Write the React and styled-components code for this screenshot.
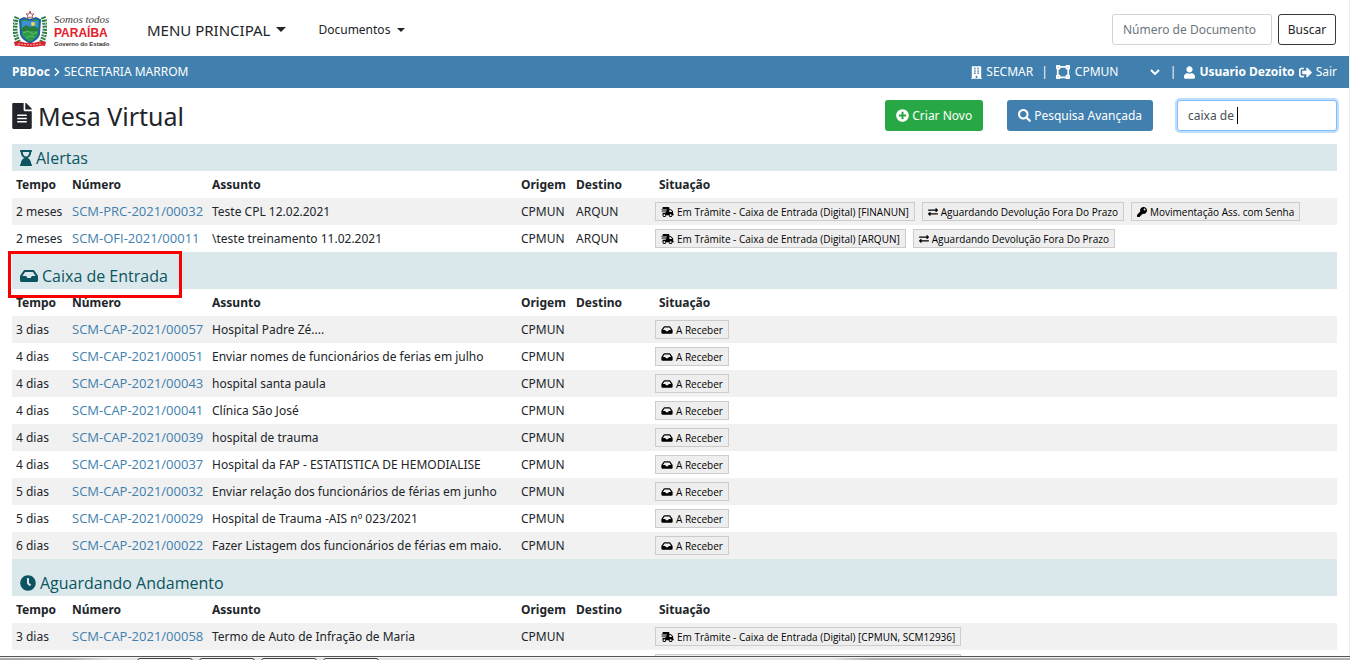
import React from "react";
import styled, { createGlobalStyle, css } from "styled-components";
import {
  FaBuilding,
  FaChevronRight,
  FaClock,
  FaExchangeAlt,
  FaFileAlt,
  FaHourglassEnd,
  FaInbox,
  FaKey,
  FaPlusCircle,
  FaSearch,
  FaShippingFast,
  FaSignOutAlt,
  FaUser,
  FaVectorSquare,
} from "react-icons/fa";

const color = {
  text: "#212529",
  primary: "#407fae",
  success: "#28a745",
  info: "#0c5460",
  infoBg: "#dae8ec",
  stripe: "#f1f1f1",
};

const GlobalStyle = createGlobalStyle`
  *, *::before, *::after { box-sizing: border-box; }
  body {
    margin: 0;
    background: #fff;
    color: ${color.text};
    font-family: "Noto Sans", "Open Sans", sans-serif;
    font-size: 12px;
    line-height: 18px;
  }
  button, input, select { font: inherit; }
`;

const Glyph = styled.svg`
  flex: none;
  width: ${(p) => p.$width}px;
  height: ${(p) => p.$height || p.$width}px;
`;

const Screen = styled.div`
  display: flex;
  flex-direction: column;
  height: 100vh;
`;

const Page = styled.div`
  flex: 1;
  min-height: 0;
  overflow: hidden;
  border-right: 1px solid #ececec;
`;

const Header = styled.header`
  display: flex;
  align-items: center;
  height: 56px;
  padding: 3px 13px 0 12px;
`;

const Brand = styled.a`
  display: flex;
  align-items: center;
  gap: 7px;
  width: 135px;
  padding-left: 1px;
  text-decoration: none;
`;

const Shield = styled.svg`
  width: 34px;
  height: 37px;
`;

const BrandText = styled.span`
  display: flex;
  flex-direction: column;
  white-space: nowrap;
`;

const Slogan = styled.span`
  color: #444;
  font: italic 11px/14px "Liberation Serif", serif;
`;

const StateName = styled.span`
  color: #e3202b;
  font: bold 12px/14px "Liberation Sans", sans-serif;
`;

const Government = styled.span`
  color: #333;
  font: bold 6px/8px "Liberation Sans", sans-serif;
`;

const Nav = styled.nav`
  display: flex;
  align-items: center;
  gap: 32px;
  flex: 1;
`;

const MenuButton = styled.button`
  display: flex;
  align-items: center;
  gap: ${(p) => (p.$large ? 6 : 7)}px;
  padding: 0;
  border: 0;
  background: none;
  color: ${color.text};
  font-size: ${(p) => (p.$large ? 15 : 12)}px;

  &::after {
    content: "";
    border: ${(p) => (p.$large ? 5 : 4)}px solid transparent;
    border-top-color: ${color.text};
    border-bottom: 0;
  }
`;

const HeaderSearch = styled.form`
  display: flex;
  gap: 6px;
`;

const TextInput = styled.input`
  display: block;
  width: 160px;
  height: 31px;
  padding: 0 10px;
  border: 1px solid #ced4da;
  border-radius: 3px;
  outline: 0;
  background: #fff;
  color: #495057;

  &::placeholder { color: #6c757d; opacity: 1; }

  ${(p) =>
    p.$focused &&
    css`
      border-color: #80bdff;
      box-shadow: 0 0 0 2px rgba(0, 123, 255, 0.25);
    `}
`;

const OutlineButton = styled.button`
  height: 31px;
  width: 58px;
  padding: 0;
  border: 1px solid #343a40;
  border-radius: 3px;
  background: #fff;
  color: ${color.text};
`;

const StatusBar = styled.div`
  display: flex;
  align-items: center;
  justify-content: space-between;
  height: 32px;
  padding: 0 12px;
  background: ${color.primary};
  color: #fff;
`;

const Breadcrumb = styled.div`
  display: flex;
  align-items: center;
  gap: 4px;
`;

const SessionInfo = styled.div`
  display: flex;
  align-items: center;
  gap: 8px;
`;

const SessionItem = styled.span`
  display: flex;
  align-items: center;
  gap: 4px;
`;

const UnitSelect = styled.select`
  appearance: none;
  width: 90px;
  height: 24px;
  padding: 0;
  border: 0;
  background: none;
  color: inherit;
`;

const UnitField = styled.label`
  display: flex;
  align-items: center;
  gap: 5px;
  margin-right: 2px;
`;

const UnitChevron = styled.svg`
  width: 10px;
  height: 6px;
  margin-left: -20px;
  pointer-events: none;
`;

const LogoutLink = styled.a`
  display: flex;
  align-items: center;
  gap: 4px;
  color: #fff;
  text-decoration: none;
`;

const Main = styled.main`
  padding: 0 12px;
`;

const TitleBar = styled.div`
  display: flex;
  align-items: center;
  justify-content: space-between;
  height: 56px;
  padding-bottom: 1px;
`;

const Title = styled.h1`
  display: flex;
  align-items: center;
  gap: 6px;
  margin: 0;
  font-size: 25px;
  font-weight: 400;
  line-height: 32px;
`;

const Actions = styled.div`
  display: flex;
  gap: 24px;
`;

const ActionButton = styled.button`
  display: flex;
  align-items: center;
  gap: 3px;
  height: 31px;
  padding: 0 11px;
  border: 0;
  border-radius: 3px;
  background: ${(p) => (p.$success ? color.success : color.primary)};
  color: #fff;
`;

const FilterField = styled.div`
  position: relative;
`;

const TextCursor = styled.span`
  position: absolute;
  top: 7px;
  left: 60px;
  width: 1px;
  height: 17px;
  background: #000;
`;

const SectionHeading = styled.h2`
  position: relative;
  display: flex;
  align-items: center;
  gap: 4px;
  margin: 0;
  padding: ${(p) => (p.$spaced ? 12 : 2)}px 8px 1px;
  background: ${color.infoBg};
  color: ${color.info};
  font-family: "Open Sans", "Noto Sans", sans-serif;
  font-size: 16px;
  font-weight: 400;
  line-height: 24px;
`;

const Highlight = styled.span`
  position: absolute;
  z-index: 1;
  top: -1px;
  left: -4px;
  width: 174px;
  height: 47px;
  border: 3px solid #f90000;
`;

const DocumentTable = styled.table`
  width: 100%;
  table-layout: fixed;
  border-collapse: collapse;
`;

const Column = styled.col`
  width: ${(p) => p.$width}px;
`;

const Row = styled.tr`
  height: 27px;
  background: ${(p) => (p.$striped ? color.stripe : "#fff")};
`;

const HeadCell = styled.th`
  padding: 0 4px;
  padding-left: ${(p) => (p.$inset ? 8 : 4)}px;
  text-align: left;
  font-weight: 700;
  white-space: nowrap;
`;

const Cell = styled.td`
  padding: 0 4px;
  white-space: nowrap;
`;

const DocumentLink = styled.a`
  color: ${color.primary};
  font-family: "Open Sans", "Noto Sans", sans-serif;
  font-size: 13px;
  text-decoration: none;
`;

const TagList = styled.div`
  display: flex;
  gap: 7px;
`;

const Tag = styled.span`
  display: flex;
  align-items: center;
  gap: 3px;
  height: 19px;
  padding: 0 5px;
  border: 1px solid #ccc;
  background: #eee;
  color: #000;
  font-family: "Open Sans", "Noto Sans", sans-serif;
  font-size: 10px;
`;

const PendingTag = styled(Tag)`
  width: 306px;
`;

const Taskbar = styled.div`
  height: 4px;
  border-top: 1px solid #555;
  background: linear-gradient(90deg, #a8a8a8 0, #b0b0b0 70px, #e6e6e6 110px, #e6e6e6 830px, #b0b0b0 870px, #b0b0b0 100%);
  overflow: hidden;
`;

const TaskbarTabs = styled.div`
  display: flex;
  gap: 6px;
  padding-left: 137px;
  border-top: 1px solid #f4f4f4;
`;

const TaskbarTab = styled.span`
  width: 56px;
  height: 8px;
  border: 1px solid #444;
  border-radius: 3px;
  background: #fafafa;
`;

const tagIcons = {
  transit: { icon: FaShippingFast, width: 13 },
  inbox: { icon: FaInbox, width: 12 },
  exchange: { icon: FaExchangeAlt, width: 10 },
  key: { icon: FaKey, width: 10 },
};

const inboxTag = [["inbox", "A Receber"]];

const sections = [
  {
    title: "Alertas",
    icon: FaHourglassEnd,
    iconWidth: 12,
    rows: [
      ["2 meses", "SCM-PRC-2021/00032", "Teste CPL 12.02.2021", "CPMUN", "ARQUN", [
        ["transit", "Em Trâmite - Caixa de Entrada (Digital) [FINANUN]"],
        ["exchange", "Aguardando Devolução Fora Do Prazo"],
        ["key", "Movimentação Ass. com Senha"],
      ]],
      ["2 meses", "SCM-OFI-2021/00011", "\\teste treinamento 11.02.2021", "CPMUN", "ARQUN", [
        ["transit", "Em Trâmite - Caixa de Entrada (Digital) [ARQUN]"],
        ["exchange", "Aguardando Devolução Fora Do Prazo"],
      ]],
    ],
  },
  {
    title: "Caixa de Entrada",
    icon: FaInbox,
    iconWidth: 18,
    highlighted: true,
    rows: [
      ["3 dias", "SCM-CAP-2021/00057", "Hospital Padre Zé....", "CPMUN", "", inboxTag],
      ["4 dias", "SCM-CAP-2021/00051", "Enviar nomes de funcionários de ferias em julho", "CPMUN", "", inboxTag],
      ["4 dias", "SCM-CAP-2021/00043", "hospital santa paula", "CPMUN", "", inboxTag],
      ["4 dias", "SCM-CAP-2021/00041", "Clínica São José", "CPMUN", "", inboxTag],
      ["4 dias", "SCM-CAP-2021/00039", "hospital de trauma", "CPMUN", "", inboxTag],
      ["4 dias", "SCM-CAP-2021/00037", "Hospital da FAP - ESTATISTICA DE HEMODIALISE", "CPMUN", "", inboxTag],
      ["5 dias", "SCM-CAP-2021/00032", "Enviar relação dos funcionários de férias em junho", "CPMUN", "", inboxTag],
      ["5 dias", "SCM-CAP-2021/00029", "Hospital de Trauma -AIS nº 023/2021", "CPMUN", "", inboxTag],
      ["6 dias", "SCM-CAP-2021/00022", "Fazer Listagem dos funcionários de férias em maio.", "CPMUN", "", inboxTag],
    ],
  },
  {
    title: "Aguardando Andamento",
    icon: FaClock,
    iconWidth: 16,
    loadingMore: true,
    rows: [
      ["3 dias", "SCM-CAP-2021/00058", "Termo de Auto de Infração de Maria", "CPMUN", "", [
        ["transit", "Em Trâmite - Caixa de Entrada (Digital) [CPMUN, SCM12936]"],
      ]],
    ],
  },
];

function CoatOfArms() {
  return (
    <Shield viewBox="0 0 34 37" aria-hidden="true">
      <path d="M4 6C1 12 1 24 6 32M30 6c3 6 3 18-2 26" fill="none" stroke="#2c7d45" strokeWidth="5" strokeDasharray="2 1" />
      <path d="M2 8c-1 8 0 16 3 22M32 8c1 8 0 16-3 22" fill="none" stroke="#d9e8cf" strokeWidth="1" strokeDasharray="1 3" />
      <path d="M7 9l4-2 6 2 6-2 4 2-1 14c-1 5-5 6-9 9-4-3-8-4-9-9z" fill="#2f9a4a" stroke="#1e5fa8" strokeWidth="2" />
      <path d="M9 10h16v7H9z" fill="#3d8fd8" />
      <path d="M9 17l4-3 4 2 4-1 4 2v3H9z" fill="#257c3d" />
      <path d="M10 22l5-2 5 3 4-2M13 27l4-2 4 1" fill="none" stroke="#63bd5f" strokeWidth="1" />
      <circle cx="20" cy="13" r="2" fill="#f4d84a" />
      <path d="M17 0l1 3h3l-2 2 1 3-3-2-3 2 1-3-2-2h3z" fill="#fff" stroke="#a8545a" strokeWidth="1" />
      <path d="M1 31c5-2 8 1 16 1s11-3 16-1l-1 4c-4-1-7 1-15 1S6 34 2 35z" fill="#d8262f" />
      <path d="M5 33c5 0 8 1 12 1s8-1 12-1" fill="none" stroke="#f5b5b5" strokeWidth="1" strokeDasharray="2 1" />
    </Shield>
  );
}

function StatusTag({ kind, children }) {
  const { icon, width } = tagIcons[kind];
  return (
    <Tag>
      <Glyph as={icon} $width={width} $height={10} />
      {children}
    </Tag>
  );
}

function Section({ title, icon, iconWidth, highlighted, loadingMore, rows, spaced }) {
  return (
    <section>
      <SectionHeading $spaced={spaced}>
        <Glyph as={icon} $width={iconWidth} $height={16} />
        {title}
        {highlighted && <Highlight />}
      </SectionHeading>
      <DocumentTable aria-label={title}>
        <colgroup>
          <Column $width={56} />
          <Column $width={140} />
          <Column $width={309} />
          <Column $width={55} />
          <Column $width={79} />
          <col />
        </colgroup>
        <thead>
          <Row>
            <HeadCell>Tempo</HeadCell>
            <HeadCell>Número</HeadCell>
            <HeadCell>Assunto</HeadCell>
            <HeadCell>Origem</HeadCell>
            <HeadCell>Destino</HeadCell>
            <HeadCell $inset>Situação</HeadCell>
          </Row>
        </thead>
        <tbody>
          {rows.map(([time, number, subject, origin, target, tags], i) => (
            <Row key={number} $striped={i % 2 === 0}>
              <Cell>{time}</Cell>
              <Cell><DocumentLink href="#documento">{number}</DocumentLink></Cell>
              <Cell>{subject}</Cell>
              <Cell>{origin}</Cell>
              <Cell>{target}</Cell>
              <Cell>
                <TagList>
                  {tags.map(([kind, label]) => (
                    <StatusTag key={label} kind={kind}>{label}</StatusTag>
                  ))}
                </TagList>
              </Cell>
            </Row>
          ))}
          {loadingMore && (
            <Row>
              <Cell colSpan={5} />
              <Cell><PendingTag /></Cell>
            </Row>
          )}
        </tbody>
      </DocumentTable>
    </section>
  );
}

export default function App() {
  return (
    <Screen>
      <GlobalStyle />
      <Page>
        <Header>
          <Brand href="#inicio">
            <CoatOfArms />
            <BrandText>
              <Slogan>Somos todos</Slogan>
              <StateName>PARAÍBA</StateName>
              <Government>Governo do Estado</Government>
            </BrandText>
          </Brand>
          <Nav>
            <MenuButton $large>MENU PRINCIPAL</MenuButton>
            <MenuButton>Documentos</MenuButton>
          </Nav>
          <HeaderSearch>
            <TextInput aria-label="Número de Documento" placeholder="Número de Documento" />
            <OutlineButton type="button">Buscar</OutlineButton>
          </HeaderSearch>
        </Header>
        <StatusBar>
          <Breadcrumb>
            <strong>PBDoc</strong>
            <Glyph as={FaChevronRight} $width={6} $height={10} />
            <span>SECRETARIA MARROM</span>
          </Breadcrumb>
          <SessionInfo>
            <SessionItem>
              <Glyph as={FaBuilding} $width={11} $height={13} />
              SECMAR
            </SessionItem>
            <span>|</span>
            <UnitField>
              <Glyph as={FaVectorSquare} $width={14} />
              <UnitSelect aria-label="Lotação" defaultValue="CPMUN">
                <option>CPMUN</option>
              </UnitSelect>
              <UnitChevron viewBox="0 0 10 6" aria-hidden="true">
                <path d="M1 1l4 4 4-4" fill="none" stroke="#fff" strokeWidth="2" />
              </UnitChevron>
            </UnitField>
            <span>|</span>
            <SessionItem>
              <Glyph as={FaUser} $width={11} $height={13} />
              <strong>Usuario Dezoito</strong>
              <LogoutLink href="#sair">
                <Glyph as={FaSignOutAlt} $width={13} />
                Sair
              </LogoutLink>
            </SessionItem>
          </SessionInfo>
        </StatusBar>
        <Main>
          <TitleBar>
            <Title>
              <Glyph as={FaFileAlt} $width={20} $height={26} />
              Mesa Virtual
            </Title>
            <Actions>
              <ActionButton $success>
                <Glyph as={FaPlusCircle} $width={13} />
                Criar Novo
              </ActionButton>
              <ActionButton>
                <Glyph as={FaSearch} $width={13} />
                Pesquisa Avançada
              </ActionButton>
              <FilterField>
                <TextInput $focused aria-label="Filtrar" defaultValue="caixa de " />
                <TextCursor />
              </FilterField>
            </Actions>
          </TitleBar>
          {sections.map((section, i) => (
            <Section key={section.title} {...section} spaced={i > 0} />
          ))}
        </Main>
      </Page>
      <Taskbar>
        <TaskbarTabs>
          <TaskbarTab />
          <TaskbarTab />
          <TaskbarTab />
          <TaskbarTab />
        </TaskbarTabs>
      </Taskbar>
    </Screen>
  );
}
